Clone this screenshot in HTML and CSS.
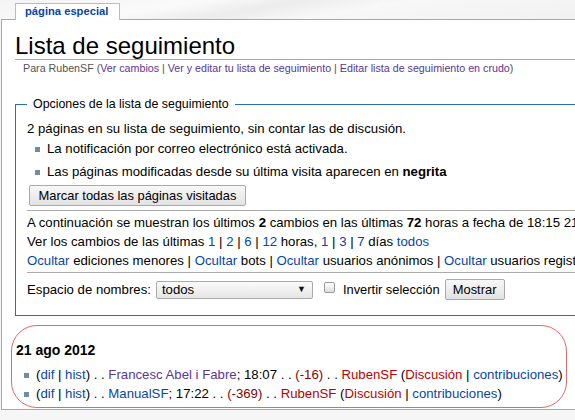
FILE: index.html
```html
<!DOCTYPE html>
<html lang="es">
<head>
<meta charset="utf-8">
<title>Lista de seguimiento</title>
<link rel="stylesheet" href="styles.css">
</head>
<body>
<div class="page">
  <div class="tabs">
    <div class="tab">página especial</div>
  </div>
  <div class="content">
    <h1 class="title">Lista de seguimiento</h1>
    <div class="sub">Para RubenSF (<a class="visited">Ver cambios</a> | <a class="visited">Ver y editar tu lista de seguimiento</a> | <a class="visited">Editar lista de seguimiento en crudo</a>)</div>

    <fieldset class="options">
      <legend>Opciones de la lista de seguimiento</legend>
      <p class="line first">2 páginas en su lista de seguimiento, sin contar las de discusión.</p>
      <ul class="notes">
        <li>La notificación por correo electrónico está activada.</li>
        <li>Las páginas modificadas desde su última visita aparecen en <b>negrita</b></li>
      </ul>
      <button class="btn mark">Marcar todas las páginas visitadas</button>
      <hr class="rule">
      <p class="line">A continuación se muestran los últimos <b>2</b> cambios en las últimas <b>72</b> horas a fecha de 18:15 21 ago 2012</p>
      <p class="line">Ver los cambios de las últimas <a>1</a> | <a>2</a> | <a>6</a> | <a>12</a> horas, <a>1</a> | <a>3</a> | <a>7</a> días <a>todos</a></p>
      <p class="line"><a>Ocultar</a> ediciones menores | <a>Ocultar</a> bots | <a>Ocultar</a> usuarios anónimos | <a>Ocultar</a> usuarios registrados | <a>Ocultar</a> mis ediciones</p>
      <hr class="rule second">
      <div class="filter">
        <span class="label">Espacio de nombres:</span>
        <span class="select"><span class="select-text">todos</span><span class="select-arrow">▼</span></span>
        <span class="check"></span>
        <span class="label invert">Invertir selección</span>
        <button class="btn show">Mostrar</button>
      </div>
    </fieldset>

    <div class="daybox">
      <h4 class="day">21 ago 2012</h4>
      <ul class="changes">
        <li>(<a>dif</a> | <a>hist</a>) . . <a class="visited">Francesc Abel i Fabre</a>; 18:07 . . <span class="neg">(-16)</span> . . <a class="new">RubenSF</a> (<a class="new">Discusión</a> | <a>contribuciones</a>)</li>
        <li>(<a>dif</a> | <a>hist</a>) . . <a>ManualSF</a>; 17:22 . . <span class="neg">(-369)</span> . . <a class="new">RubenSF</a> (<a class="new">Discusión</a> | <a>contribuciones</a>)</li>
      </ul>
    </div>
  </div>
</div>
</body>
</html>
```

FILE: styles.css
```css
html, body {
  margin: 0;
  padding: 0;
}
body {
  width: 575px;
  height: 420px;
  overflow: hidden;
  background: #f6f6f6;
  font-family: "Liberation Sans", Arial, sans-serif;
  color: #000;
}
.page {
  background: linear-gradient(170deg, #f4f4f4 0%, #fafafa 30%, #ececec 45%, #f8f8f8 60%, #f1f1f1 100%);
  background-size: 100% 19px;
  background-repeat: no-repeat;
  background-color: #f6f6f6;
  padding-top: 3px;
}
.tabs {
  display: flex;
  padding-left: 15px;
  height: 16px;
}
.tab {
  position: relative;
  z-index: 1;
  box-sizing: border-box;
  width: 105px;
  height: 17px;
  background: #fff;
  border: 1px solid #e8b94e;
  border-bottom: none;
  color: #0645ad;
  font-weight: bold;
  font-size: 11.2px;
  line-height: 14px;
  padding-left: 9px;
}
.content {
  margin-left: 1px;
  width: 820px;
  background: #fff;
  border-top: 1px solid #a7a7a7;
  border-left: 1px solid #a7a7a7;
  border-bottom: 1px solid #a7a7a7;
  padding: 13px 0 1px 13px;
  font-size: 13.2px;
  line-height: 19px;
  white-space: nowrap;
}
a {
  color: #0645ad;
  text-decoration: none;
}
a.visited { color: #5a3696; }
a.new { color: #ba0000; }
.neg { color: #8b0000; }

.title {
  margin: 0;
  font-weight: normal;
  font-size: 24px;
  line-height: 26px;
  border-bottom: 1px solid #aaa;
}
.sub {
  margin: 2px 0 0 8px;
  font-size: 10.7px;
  line-height: 13px;
  color: #545454;
}
.options {
  margin: 20px 0 0 0;
  padding: 0 12px 15px 11px;
  border: 1px solid #2a6ebb;
  border-right: none;
  min-width: 0;
}
.options legend {
  padding: 0 6px;
  margin-left: 0;
  font-size: 12.4px;
  line-height: 19px;
}
.line {
  margin: 0;
}
.line.first {
  margin-top: 5px;
}
.notes {
  list-style: none;
  margin: 1px 0 0 0;
  padding: 0 0 0 20px;
}
.notes li {
  position: relative;
  margin-bottom: 4px;
}
.notes li::before,
.changes li::before {
  content: "";
  position: absolute;
  left: -12px;
  top: 8px;
  width: 5px;
  height: 5px;
  background: #6f8ea3;
}
.btn {
  font-family: "Liberation Sans", Arial, sans-serif;
  font-size: 12.9px;
  color: #000;
  background: linear-gradient(#f8f8f8, #e2e2e2);
  border: 1px solid #a9a9a9;
  border-radius: 2px;
  height: 21px;
  padding: 0 7px;
  line-height: 19px;
}
.mark {
  display: block;
  margin: 0 0 0 2px;
  width: 217px;
}
.rule {
  margin: 4px 0 2px 0;
  border: none;
  border-top: 1px solid #aaa;
  height: 0;
}
.rule.second {
  margin-top: 2px;
}
.filter {
  display: flex;
  align-items: center;
  margin-top: 6px;
  height: 21px;
}
.label {
  line-height: 19px;
}
.select {
  display: flex;
  align-items: center;
  box-sizing: border-box;
  margin-left: 5px;
  width: 157px;
  height: 18px;
  border: 1px solid #aaa;
  border-radius: 2px;
  background: linear-gradient(#fafafa, #e6e6e6);
  padding: 0 6px 0 5px;
}
.select-text {
  flex: 1;
  line-height: 16px;
}
.select-arrow {
  font-size: 9px;
  color: #111;
}
.check {
  box-sizing: border-box;
  width: 11px;
  height: 11px;
  margin-left: 11px;
  margin-top: -4px;
  border: 1px solid #9a9a9a;
  border-radius: 2px;
  background: linear-gradient(#fff, #dedede);
}
.invert {
  margin-left: 8px;
  font-size: 12.9px;
}
.show {
  margin-left: 5px;
  width: 60px;
  padding: 0;
}
.daybox {
  box-sizing: border-box;
  width: 556px;
  height: 83px;
  margin: 9px 0 0 -4px;
  border: 1px solid #df6a6a;
  border-radius: 26px;
  padding: 14px 0 0 4px;
}
.day {
  margin: 0;
  font-size: 14px;
  line-height: 20px;
  font-weight: bold;
}
.changes {
  list-style: none;
  margin: 5px 0 0 0;
  padding: 0 0 0 20px;
}
.changes li {
  position: relative;
}
```
